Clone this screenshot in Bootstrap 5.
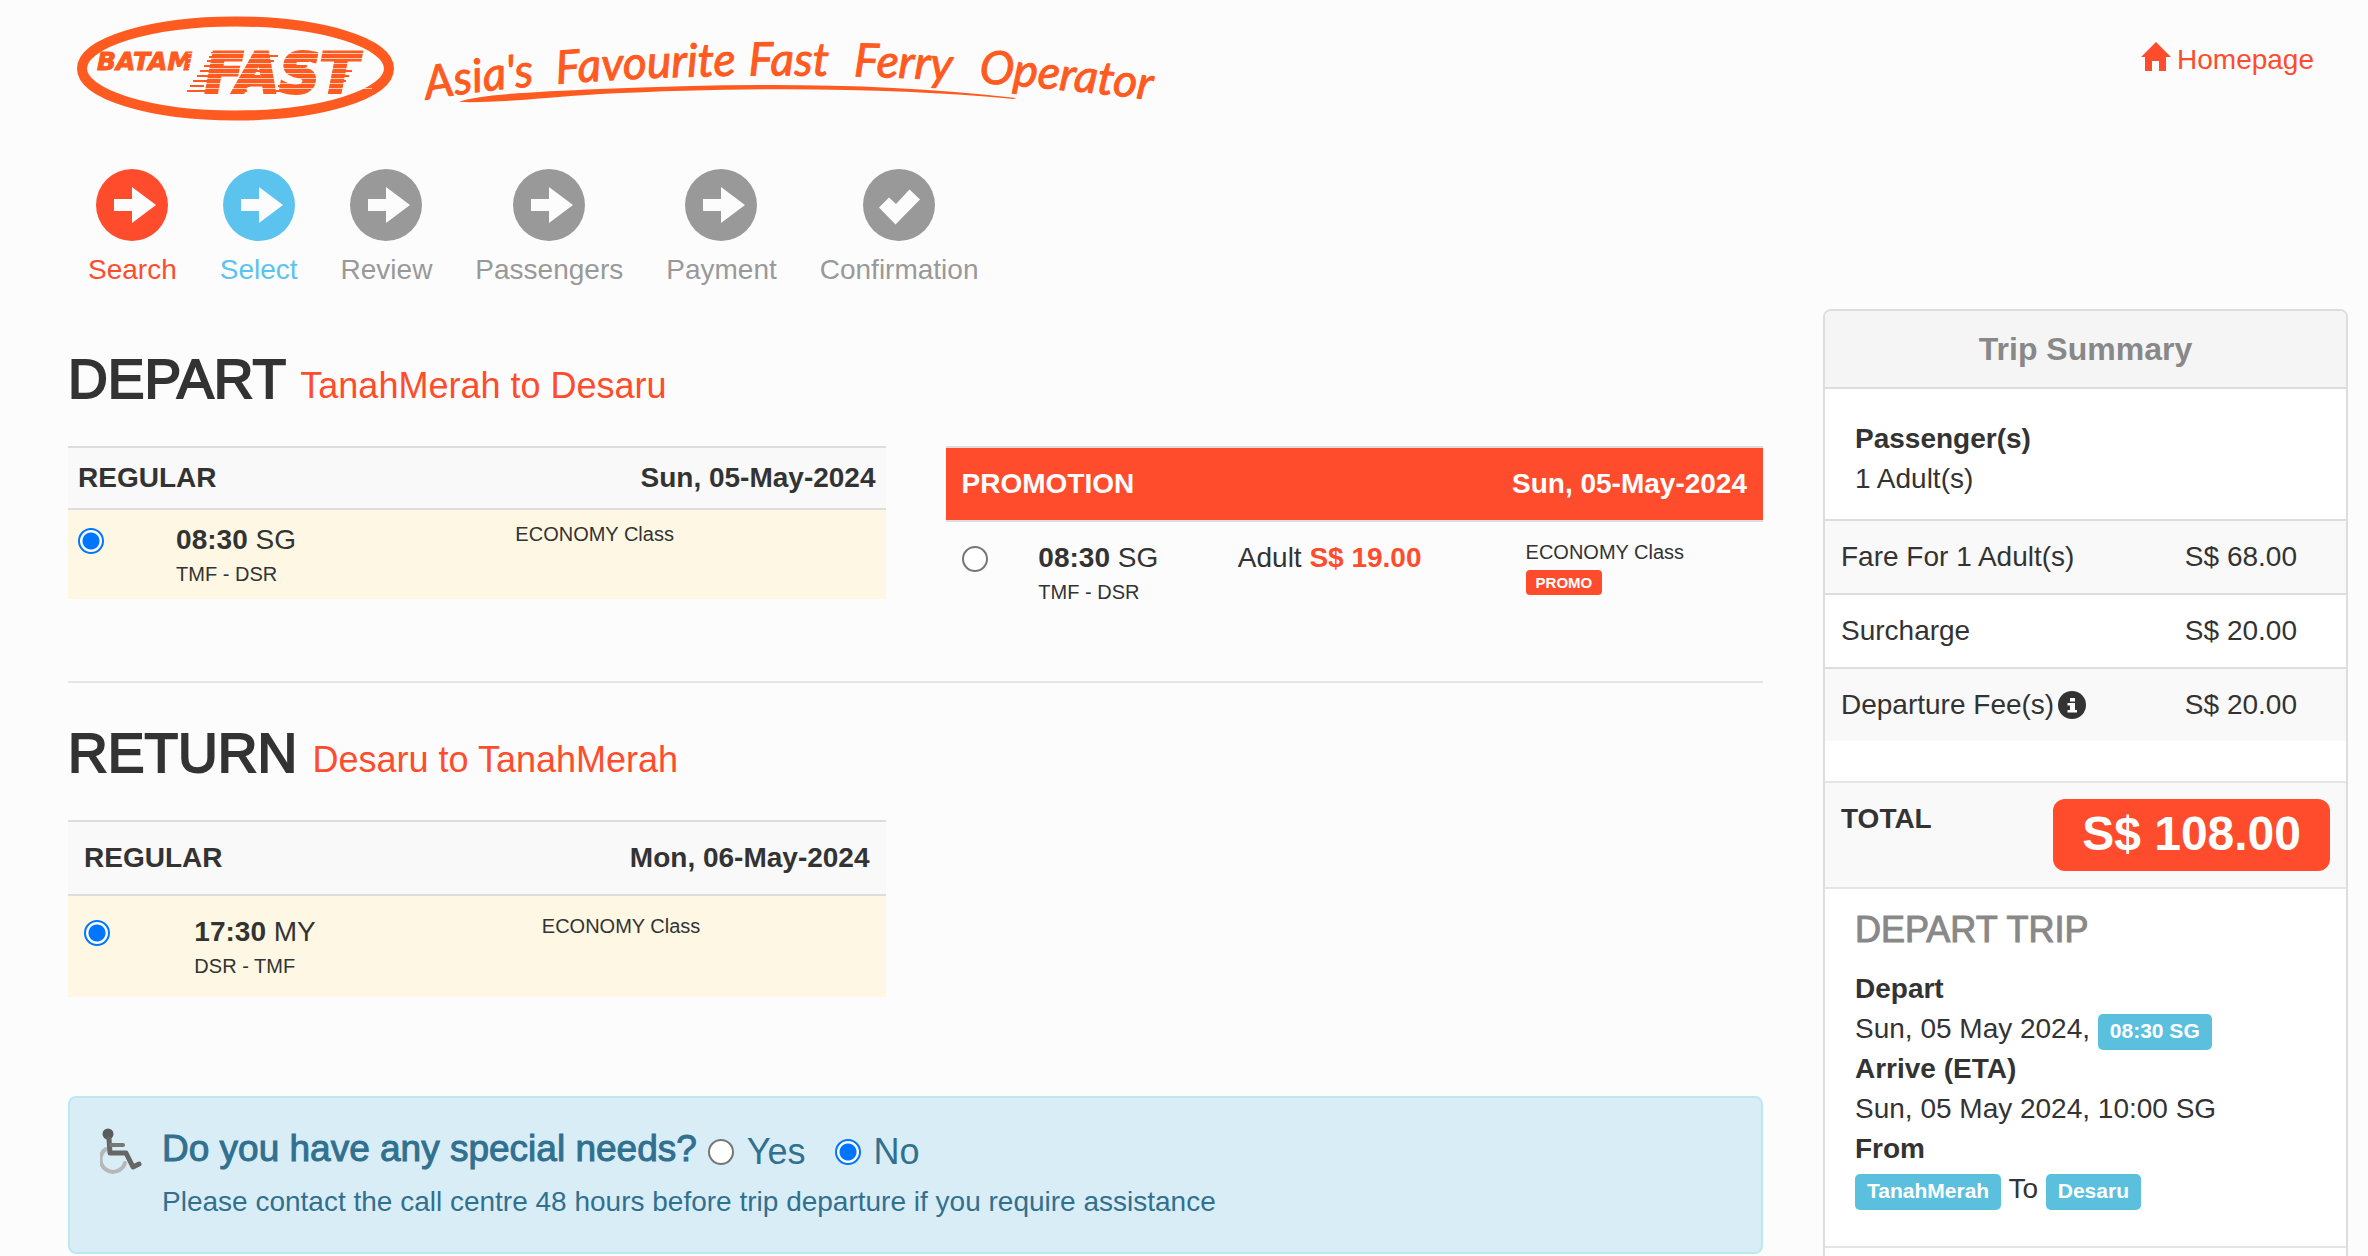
<!DOCTYPE html>
<html lang="en">
<head>
<meta charset="utf-8">
<meta name="viewport" content="width=device-width, initial-scale=1">
<title>BatamFast - Select Trip</title>
<link href="https://cdn.jsdelivr.net/npm/bootstrap@5.3.0/dist/css/bootstrap.min.css" rel="stylesheet">
<style>
:root { --brand: #ff4c2c; --line: #ddd; --soft: #f9f9f9; }
body { font: 28px/40px "Liberation Sans", Arial, sans-serif; color: #333; background: #fcfcfc; }
a { color: var(--brand); text-decoration: none; }
.text-brand { color: var(--brand); }
.site-head { padding: 10px 54px 0 68px; }
.home-link { gap: 6px; margin-top: 30px; }
.home-link svg { margin-top: 1px; }
.steps { gap: 43px; padding: 29px 0 0 88px; color: #999; }
.steps svg { display: block; margin: 0 auto 9px; }
.steps .done { color: var(--brand); }
.steps .current { color: #5bc3ee; }
.layout { gap: 60px; padding: 19px 20px 0 68px; }
.trip-title { font-size: 55px; line-height: 62px; margin: 39px 0 36px; -webkit-text-stroke: 2px; }
.trip-title span { font-size: 36px; line-height: 36px; -webkit-text-stroke: 0; }
.pair { column-gap: 60px; }
.pair > * { flex: 1 1 0; }
.fares { --cell: 16px; table-layout: fixed; margin: 0; color: #333; border-top: 2px solid var(--line); }
.fares.tight { --cell: 10px; }
.fares > :not(caption) > * > * { padding: var(--cell); color: inherit; background: none; box-shadow: none; border: 0; vertical-align: top; }
.fares thead tr { background: var(--soft); border-bottom: 2px solid var(--line); }
.fares .promo-head { background: var(--brand); color: #fff; }
.fares .chosen { background: #fdf7e3; }
.fares small, .fares label { display: block; }
.fares small { font-size: 20px; line-height: 29px; }
.pick { appearance: none; display: block; flex: none; width: 26px; height: 26px; margin: 0; border: 2px solid #767676; border-radius: 50%; background: #fff; }
.pick:checked { border-color: #0075ff; background: radial-gradient(circle, #0075ff 8px, #fff 9px); }
td .pick { margin-top: 8px; }
.tag-promo { display: block; width: max-content; margin-top: 3px; padding: 0 10px; font-size: 15px; line-height: 25px; font-weight: 700; color: #fff; background: var(--brand); border-radius: 4px; }
.divider { height: 2px; margin: 58px 0 0; border: 0; background: #e5e5e5; opacity: 1; }
.needs { gap: 18px; margin: 99px 0 0; padding: 30px; color: #31708f; background: #d9edf7; border: 2px solid #bce8f1; border-radius: 8px; }
.needs fieldset { display: flex; margin-bottom: 7px; }
.needs legend { width: auto; margin: 0 11px 0 0; font-size: 37px; line-height: 42px; -webkit-text-stroke: 1px; }
.needs label { margin: 0 29px 0 13px; font-size: 36px; line-height: 48px; }
.needs .pick { align-self: center; }
.needs fieldset + div { margin-top: -1px; }
.summary { flex: 0 0 525px; background: #fff; border: 2px solid var(--line); border-radius: 8px; }
.summary h3 { margin: 0; padding: 18px; font-size: 32px; line-height: 40px; font-weight: 700; color: #888; text-align: center; background: #f5f5f5; border-bottom: 2px solid var(--line); border-radius: 6px 6px 0 0; }
.summary .people { padding: 30px 30px 20px; }
.costs { table-layout: fixed; margin: 0 0 40px; color: #333; }
.costs > :not(caption) > * > * { padding: 16px; font-weight: 400; color: inherit; background: none; box-shadow: none; border: 0; border-top: 2px solid var(--line); }
.costs tr:nth-child(odd) { background: var(--soft); }
.total { padding: 16px; background: var(--soft); border: solid #e5e5e5; border-width: 2px 0; }
.total strong:last-child { padding: 8px 29px 10px; font-size: 48px; line-height: 54px; color: #fff; background: var(--brand); border-radius: 12px; }
.leg { padding: 20px 30px 37px; border-bottom: 2px solid #e5e5e5; }
.leg h4 { margin: 0 0 18px; font-size: 36px; line-height: 42px; color: #888; -webkit-text-stroke: 1px; }
.leg p { height: 40px; margin: 0; }
.tag-info { display: inline-block; height: 36px; padding: 0 12px; font-size: 21px; line-height: 34px; font-weight: 700; color: #fff; background: #5bc0de; border-radius: 5px; }
</style>
</head>
<body class="vh-100 overflow-hidden">

<svg class="d-none">
  <symbol id="go" viewBox="0 0 72 72"><circle cx="36" cy="36" r="36" fill="currentColor"/><path d="M18 30h18V18l24 18-24 18V42H18z" fill="#fcfcfc"/></symbol>
  <symbol id="ok" viewBox="0 0 72 72"><circle cx="36" cy="36" r="36" fill="currentColor"/><path d="M16 38.500l10-10 7 6.500 13.500-14.500 10.500 10-24.500 25z" fill="#fcfcfc"/></symbol>
</svg>

<header class="site-head d-flex justify-content-between align-items-start">
  <a href="#" aria-label="Batam Fast">
    <svg class="d-block" width="1100" height="130" viewBox="68 10 1100 130" fill="#ff5a1f">
      <ellipse cx="235.500" cy="68.500" rx="153.500" ry="47" fill="none" stroke="#ff5a1f" stroke-width="10"/>
      <g font-family="DejaVu Sans, sans-serif" font-weight="700" font-style="italic">
        <text x="97" y="70" font-size="25" stroke="#ff5a1f" stroke-width="1">BATAM</text>
        <text x="205" y="92" font-size="56" stroke="#ff5a1f" stroke-width="3">FAST</text>
      </g>
      <path d="M211 53h14M209 57h14M207 61h14M204 66h14M200 71h14M197 76h14M193 81h14M190 86h14M187 91h18M264 56h14M262 61h12M259 66h12M255 71h10M252 76h8M246 81h8M242 86h8M237 91h10M301 56h14M297 61h12M295 66h12M278 86h18M276 91h18M335 56h12M342 71h10M339 76h10M336 81h10M333 86h10M330 91h10" stroke="#ff5a1f" stroke-width="2" fill="none"/>
      <path d="M188 53.500h184M188 58.500h184M188 63.500h184M188 68.500h184M188 73.500h184M188 78.500h184M188 83.500h184M188 88.500h184" stroke="#fcfcfc" stroke-width="1" opacity=".7" fill="none"/>
      <path id="curve" d="M425 100C560 76 800 68 980 83C1050 88 1110 95 1180 103" fill="none"/>
      <g font-family="Lato, sans-serif" font-style="italic" font-size="46" stroke="#ff5a1f" stroke-width="1">
        <text><textPath href="#curve" startOffset="2">Asia's</textPath></text>
        <text><textPath href="#curve" startOffset="133">Favourite</textPath></text>
        <text><textPath href="#curve" startOffset="325">Fast</textPath></text>
        <text><textPath href="#curve" startOffset="430">Ferry</textPath></text>
        <text><textPath href="#curve" startOffset="555">Operator</textPath></text>
      </g>
      <path d="M459 102C475 95 530 92 600 89C740 83 880 82 1016 98L1014 99C900 88 760 86 600 94C540 98 500 103 459 102z"/>
    </svg>
  </a>
  <a href="#" class="home-link d-flex">
    <svg width="30" height="30" viewBox="0 0 30 30" fill="currentColor"><path d="M15 1l15 15h-5v14h-7V20h-7v10H4V16H0z"/></svg>
    Homepage
  </a>
</header>

<ol class="steps d-flex list-unstyled mb-0">
  <li class="done"><svg width="72" height="72"><use href="#go"/></svg>Search</li>
  <li class="current"><svg width="72" height="72"><use href="#go"/></svg>Select</li>
  <li><svg width="72" height="72"><use href="#go"/></svg>Review</li>
  <li><svg width="72" height="72"><use href="#go"/></svg>Passengers</li>
  <li><svg width="72" height="72"><use href="#go"/></svg>Payment</li>
  <li><svg width="72" height="72"><use href="#ok"/></svg>Confirmation</li>
</ol>

<div class="layout d-flex align-items-start">
  <main class="flex-fill">
    <h2 class="trip-title">DEPART <span class="text-brand">TanahMerah to Desaru</span></h2>
    <div class="pair d-flex align-items-start">
      <table class="table fares tight">
        <colgroup><col style="width:12%"><col style="width:41.500%"><col></colgroup>
        <thead><tr><th colspan="2">REGULAR</th><th class="text-end">Sun, 05-May-2024</th></tr></thead>
        <tbody><tr class="chosen">
          <td><input class="pick" type="radio" name="depart" id="d1" checked></td>
          <td><label for="d1"><b>08:30</b> SG <small>TMF - DSR</small></label></td>
          <td><small>ECONOMY Class</small></td>
        </tr></tbody>
      </table>
      <table class="table fares">
        <colgroup><col style="width:9.400%"><col style="width:24.400%"><col style="width:35.200%"><col></colgroup>
        <thead><tr class="promo-head"><th colspan="2">PROMOTION</th><th colspan="2" class="text-end">Sun, 05-May-2024</th></tr></thead>
        <tbody><tr>
          <td><input class="pick" type="radio" name="depart" id="d2"></td>
          <td><label for="d2"><b>08:30</b> SG <small>TMF - DSR</small></label></td>
          <td>Adult <b class="text-brand">S$ 19.00</b></td>
          <td><small>ECONOMY Class</small><span class="tag-promo">PROMO</span></td>
        </tr></tbody>
      </table>
    </div>

    <hr class="divider">

    <h2 class="trip-title">RETURN <span class="text-brand">Desaru to TanahMerah</span></h2>
    <div class="pair d-flex align-items-start">
      <table class="table fares">
        <colgroup><col style="width:13.500%"><col style="width:42.500%"><col></colgroup>
        <thead><tr><th colspan="2">REGULAR</th><th class="text-end">Mon, 06-May-2024</th></tr></thead>
        <tbody><tr class="chosen">
          <td><input class="pick" type="radio" name="return" id="r1" checked></td>
          <td><label for="r1"><b>17:30</b> MY <small>DSR - TMF</small></label></td>
          <td><small>ECONOMY Class</small></td>
        </tr></tbody>
      </table>
      <div></div>
    </div>

    <div class="needs d-flex align-items-start">
      <svg class="flex-shrink-0" width="44" height="46" viewBox="2 0 44 46" fill="none" stroke-linecap="round">
        <path d="M8 21a12.500 12.500 0 1 0 19 14" stroke="#b5b7b8" stroke-width="4"/>
        <circle cx="10" cy="6" r="5.500" fill="#5b5b5b"/>
        <path d="M11 11l1 14h16l7 14 6-3" stroke="#666" stroke-width="5" stroke-linejoin="round"/>
        <path d="M13 17h12" stroke="#777" stroke-width="4"/>
      </svg>
      <div>
        <fieldset>
          <legend>Do you have any special needs?</legend>
          <input class="pick" type="radio" name="needs" id="yes"><label for="yes">Yes</label>
          <input class="pick" type="radio" name="needs" id="no" checked><label for="no">No</label>
        </fieldset>
        <div>Please contact the call centre 48 hours before trip departure if you require assistance</div>
      </div>
    </div>
  </main>

  <aside class="summary">
    <h3>Trip Summary</h3>
    <div class="people"><b>Passenger(s)</b><br>1 Adult(s)</div>
    <table class="table costs">
      <colgroup><col style="width:66%"><col></colgroup>
      <tbody>
        <tr><th scope="row">Fare For 1 Adult(s)</th><td>S$ 68.00</td></tr>
        <tr><th scope="row">Surcharge</th><td>S$ 20.00</td></tr>
        <tr><th scope="row"><span class="d-flex align-items-center gap-1">Departure Fee(s)
          <svg width="28" height="28" viewBox="0 0 28 28"><circle cx="14" cy="14" r="14" fill="#333"/><path d="M12 7h5v3.500h-5zM9.500 12H17v7h2v2.500H9.500V19H12v-4.500H9.500z" fill="#fff"/></svg></span></th><td>S$ 20.00</td></tr>
      </tbody>
    </table>
    <div class="total d-flex justify-content-between align-items-start">
      <strong>TOTAL</strong><strong>S$ 108.00</strong>
    </div>
    <section class="leg">
      <h4>DEPART TRIP</h4>
      <p><b>Depart</b></p>
      <p>Sun, 05 May 2024, <span class="tag-info">08:30 SG</span></p>
      <p><b>Arrive (ETA)</b></p>
      <p>Sun, 05 May 2024, 10:00 SG</p>
      <p><b>From</b></p>
      <p><span class="tag-info">TanahMerah</span> To <span class="tag-info">Desaru</span></p>
    </section>
    <section class="leg"></section>
  </aside>
</div>

<script src="https://cdn.jsdelivr.net/npm/bootstrap@5.3.0/dist/js/bootstrap.bundle.min.js"></script>
</body>
</html>
